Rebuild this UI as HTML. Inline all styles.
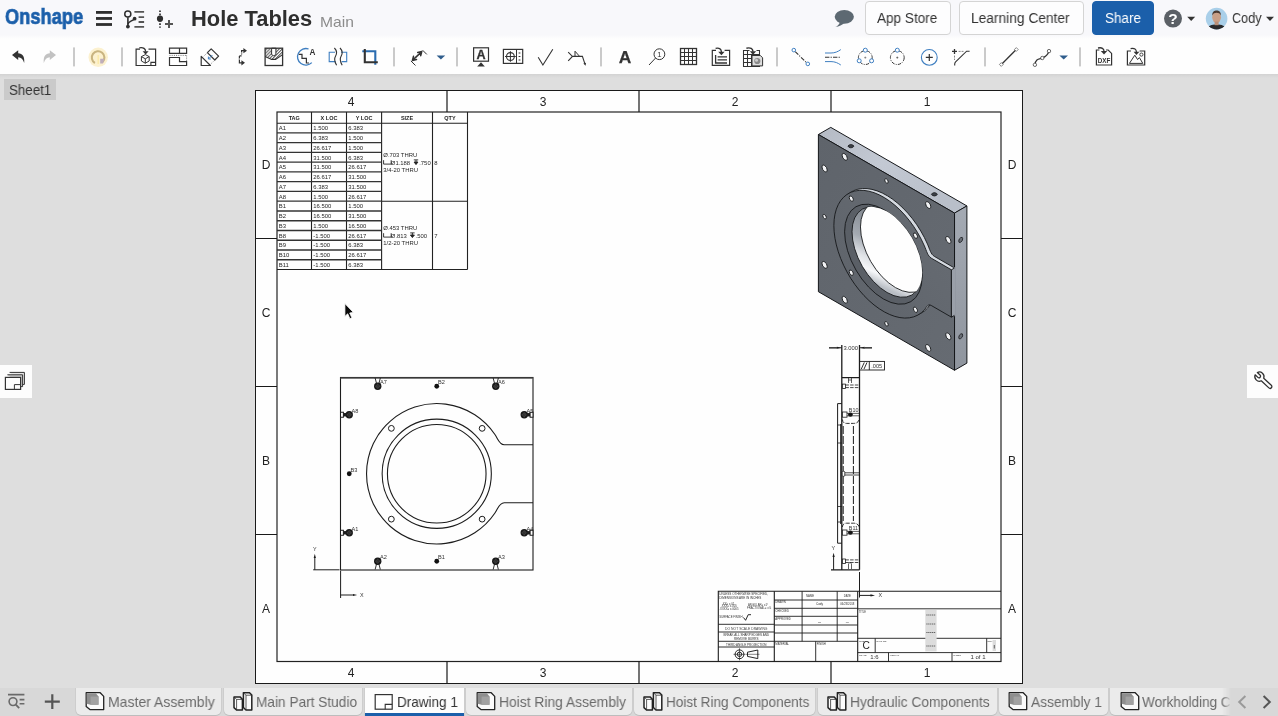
<!DOCTYPE html>
<html>
<head>
<meta charset="utf-8">
<title>Hole Tables</title>
<style>
*{box-sizing:border-box;margin:0;padding:0}
html,body{width:1278px;height:716px;overflow:hidden;background:#dedede;font-family:"Liberation Sans",sans-serif;color:#333}
.abs{position:absolute}
svg,.tx{will-change:transform}
#topbar{position:absolute;left:0;top:0;width:1278px;height:39px;background:linear-gradient(180deg,#f8f8fb 0,#f8f8fb 35px,#fefefe 39px);z-index:2}
#toolbar{position:absolute;left:0;top:37px;width:1278px;height:36.9px;background:#fefefe}
#canvas{position:absolute;left:0;top:76px;width:1278px;height:612px}
#tabbar{position:absolute;left:0;top:687.5px;width:1278px;height:28.5px;background:#d8d8d8}
.logo{position:absolute;left:4px;top:3px;font-weight:bold;font-size:24px;color:#1b5faa;letter-spacing:-1.2px;line-height:30px;transform-origin:0 0;transform:scaleX(.93)}
.title{position:absolute;left:191px;top:5px;font-weight:bold;font-size:22px;color:#2f2f2f;line-height:28px;white-space:nowrap}
.main{position:absolute;left:321px;top:11px;font-size:15px;color:#8a8a8a;line-height:20px}
.btn{position:absolute;top:1.3px;height:33.3px;border:1px solid #d4d4d4;border-radius:4px;background:#fdfdfe;font-size:14.5px;color:#333;text-align:center;line-height:29px;white-space:nowrap}
.btn.blue{background:#1b5faa;border-color:#1b5faa;color:#fff}
.sep{position:absolute;top:8px;width:2px;height:22px;background:#cfcfcf}
.ic{position:absolute;top:0;height:38px}
.sheetlbl{position:absolute;left:4.2px;top:3.4px;width:52.2px;height:21.1px;background:#cacaca}
.tab{position:absolute;top:0;height:27px;background:#ebebeb;border-radius:0 0 5px 5px;font-size:15px;color:#6a6a6a;line-height:27px;white-space:nowrap;box-shadow:0 1px 0 #bdbdbd, 1px 0 0 #cdcdcd, -1px 0 0 #cdcdcd}
.tx{position:absolute;white-space:nowrap;transform-origin:0 0;line-height:normal}
.tab.act{background:#fdfdfd;color:#333;border-bottom:3px solid #1b5faa;border-radius:0;height:28px}
.sidebtn{position:absolute;width:32px;height:33px;background:#fdfdfd;top:288.6px}
</style>
</head>
<body>
<div id="topbar">
  <div class="btn" style="left:864.5px;width:86px"></div>
  <div class="btn" style="left:959px;width:124.5px"></div>
  <div class="btn blue" style="left:1092px;width:62px"></div>
  <svg class="abs" id="topicons" style="left:0;top:0" width="1278" height="38" viewBox="0 0 1278 38"><rect x="96" y="11.0" width="16" height="2.8" fill="#2e2e2e"/>
<rect x="96" y="17.05" width="16" height="2.8" fill="#2e2e2e"/>
<rect x="96" y="23.1" width="16" height="2.8" fill="#2e2e2e"/>
<circle cx="127.8" cy="14" r="3.05" fill="none" stroke="#2e2e2e" stroke-width="1.5"/>
<path d="M127.9 17.2V26" stroke="#2e2e2e" stroke-width="1.6" fill="none"/>
<circle cx="127.9" cy="26.6" r="1.9" fill="#2e2e2e"/>
<path d="M127.9 24.5C128.2 21.5 131 21.8 134.4 19" stroke="#2e2e2e" stroke-width="1.5" fill="none"/>
<circle cx="134.6" cy="18.7" r="1.9" fill="#2e2e2e"/>
<path d="M134.4 11.9H144.1M138.6 17.1H144.1M138.6 22H144.1M134.4 26.9H144.1" stroke="#555" stroke-width="1.9" fill="none"/>
<path d="M160 10.4V27.8" stroke="#2e2e2e" stroke-width="1.7" stroke-dasharray="1.7 1.5" fill="none"/>
<circle cx="160" cy="18.7" r="3.1" fill="#2e2e2e"/>
<path d="M165 23.9H173M169 19.9V27.9" stroke="#555" stroke-width="2" fill="none"/>
<ellipse cx="844.3" cy="16.8" rx="9.6" ry="6.9" fill="#5d6972"/>
<path d="M840 21.5C839.5 24.5 837.5 26 835.4 27C839 26.6 842.5 25 844.5 22.8Z" fill="#5d6972"/>
<circle cx="1173" cy="18.6" r="9" fill="#5b6066"/>
<text x="1173" y="24.2" font-family="Liberation Sans, sans-serif" font-size="15.5" font-weight="bold" text-anchor="middle" fill="#fff">?</text>
<path d="M1187.2 16.7H1195.2L1191.2 21Z" fill="#333"/>
<clipPath id="av"><circle cx="1216.6" cy="18.6" r="10.8"/></clipPath>
<g clip-path="url(#av)"><rect x="1205" y="7" width="24" height="24" fill="#a9cfe9"/><path d="M1206 31C1207 26 1211 24.6 1216.6 24.6C1222 24.6 1226 26 1227.4 31Z" fill="#2a2a2c"/><ellipse cx="1216.6" cy="17.3" rx="4.4" ry="5.6" fill="#c99f86"/><path d="M1212.2 15.6C1212.2 11.6 1214.4 10.6 1216.6 10.6C1218.8 10.6 1221 11.6 1221 15.6C1220 13.4 1218.6 12.8 1216.6 12.8C1214.6 12.8 1213.2 13.4 1212.2 15.6Z" fill="#4a3a32"/><rect x="1214.6" y="21.6" width="4" height="3.6" fill="#b98f78"/></g>
<path d="M1266 16.7H1274L1270 21Z" fill="#333"/></svg>
<span class="tx" style="left:4.9px;top:4.25px;font-size:21.6px;font-weight:bold;color:#1b5faa;-webkit-text-stroke:0.7px #1b5faa;transform:scaleX(0.8452)">Onshape</span>
<span class="tx" style="left:191.2px;top:7.43px;font-size:21.4px;font-weight:bold;color:#2e2e2e;transform:scaleX(1.0229)">Hole Tables</span>
<span class="tx" style="left:320.3px;top:13.95px;font-size:14.2px;font-weight:normal;color:#8c8c8c;transform:scaleX(1.1019)">Main</span>
<span class="tx" style="left:877.2px;top:10.33px;font-size:14px;font-weight:normal;color:#333;transform:scaleX(0.9684)">App Store</span>
<span class="tx" style="left:971.1px;top:10.33px;font-size:14px;font-weight:normal;color:#333;transform:scaleX(0.9820)">Learning Center</span>
<span class="tx" style="left:1105.0px;top:10.33px;font-size:14px;font-weight:normal;color:#fff;transform:scaleX(0.9636)">Share</span>
<span class="tx" style="left:1232.2px;top:10.33px;font-size:14px;font-weight:normal;color:#333;transform:scaleX(0.9025)">Cody</span>
</div>
<div id="toolbar">
  <svg class="abs" id="tbicons" style="left:0;top:1px" width="1278" height="38" viewBox="0 0 1278 38"><rect x="73" y="9.4" width="2" height="19" fill="#cacaca"/>
<rect x="121" y="9.4" width="2" height="19" fill="#cacaca"/>
<rect x="393" y="9.4" width="2" height="19" fill="#cacaca"/>
<rect x="456" y="9.4" width="2" height="19" fill="#cacaca"/>
<rect x="600" y="9.4" width="2" height="19" fill="#cacaca"/>
<rect x="776" y="9.4" width="2" height="19" fill="#cacaca"/>
<rect x="984" y="9.4" width="2" height="19" fill="#cacaca"/>
<rect x="1079" y="9.4" width="2" height="19" fill="#cacaca"/>
<path d="M12 17.1L18.2 12.2V15.3C22.5 15.4 24.8 18.5 24.2 24.9C23 21 21.2 19.3 18.2 19.2V22Z" fill="#333"/>
<path d="M56 17.1L49.8 12.2V15.3C45.5 15.4 43.2 18.5 43.8 24.9C45 21 46.8 19.3 49.8 19.2V22Z" fill="#c2c2c2"/>
<circle cx="98.2" cy="19.3" r="9.7" fill="#fcf1cf"/>
<path d="M94.9 25A6.3 6.3 0 1 1 102.6 24" stroke="#c9b480" stroke-width="2.1" fill="none"/>
<path d="M98.2 17V26" stroke="#fbe9a8" stroke-width="1.4"/>
<path d="M100.2 20.8H104.4L103 25.6H100.2Z" fill="#bfaebb"/>
<path d="M140 11.2H136.1V27.5H155.6V11.2H148.5" stroke="#333" stroke-width="1.2" fill="none"/>
<path d="M150.9 27.5V24.4H155.6" stroke="#333" stroke-width="1.1" fill="none"/>
<path d="M145.3 16.6L149.2 18.6V23L145.3 25.2L141.4 23V18.6ZM141.4 18.6L145.3 20.8L149.2 18.6M145.3 20.8V25.2" stroke="#333" stroke-width="1" fill="none" stroke-linejoin="round"/>
<path d="M139.3 9.8C143.5 9 145.6 10.8 145.6 13.6" stroke="#333" stroke-width="1.3" fill="none"/>
<path d="M142.6 13.2H148.6L145.6 16.6Z" fill="#333"/>
<path d="M169.5 10.2H186.6V15.3H169.5ZM179.5 10.2V15.3" stroke="#333" stroke-width="1.2" fill="none"/>
<path d="M169.5 19.5H179.5V23.6H186.6V27.5H169.5Z" stroke="#333" stroke-width="1.2" fill="none"/>
<path d="M169.5 17.4H186.6M186.6 17.4V23" stroke="#666" stroke-width="0.9" stroke-dasharray="1 1.2" fill="none"/>
<path d="M201.2 18.4V27.5H210.4Z" stroke="#333" stroke-width="1.2" fill="none" stroke-linejoin="round"/>
<path d="M207.4 14.6L211.2 10.8L218.6 18.2L214.8 22Z" stroke="#333" stroke-width="1.2" fill="none" stroke-linejoin="round"/>
<path d="M203.8 18.2L207.4 14.6M211.2 25.6L214.8 22" stroke="#777" stroke-width="0.8" stroke-dasharray="1 1" fill="none"/>
<path d="M212.4 17L208.6 20.8M208.4 18.6V21H210.8" stroke="#3f7fc1" stroke-width="1" fill="none"/>
<path d="M244 12.7H241.6V16.6M239.4 18V24.8H242M241.6 17.9H239.4" stroke="#333" stroke-width="1.2" fill="none"/>
<path d="M241.6 14.6V15.4M239.4 20.6V21.6" stroke="#fefefe" stroke-width="1.6" fill="none"/>
<path d="M243.4 10.1L247 12.7L243.4 15.3ZM241.4 22.2L245 24.8L241.4 27.4Z" fill="#333"/>
<defs><pattern id="hat" width="2.2" height="2.2" patternUnits="userSpaceOnUse" patternTransform="rotate(45)"><rect width="2.2" height="2.2" fill="#fff"/><rect width="1.1" height="2.2" fill="#666"/></pattern></defs>
<path d="M265.1 10.2H282.6V16.6L275.6 21.4H271.6L265.1 18.6Z" fill="url(#hat)"/>
<path d="M271.6 10.2V16.6Q273.7 19 275.9 16.6V10.2Z" fill="#fff" stroke="#333" stroke-width="1"/>
<path d="M265.1 18.6L271.6 21.4H275.6L282.6 16.6" stroke="#333" stroke-width="1.1" fill="none"/>
<rect x="265.1" y="10.2" width="17.5" height="17.3" fill="none" stroke="#333" stroke-width="1.3"/>
<path d="M311.8 24.6A8.3 8.3 0 1 1 308.6 11" stroke="#3f7fc1" stroke-width="1.3" fill="none"/>
<path d="M298.8 16.4H302V20.4H306.4V25H309" stroke="#333" stroke-width="1.2" fill="none"/>
<text x="312.4" y="17.2" font-family="Liberation Sans, sans-serif" font-size="8.2" font-weight="bold" text-anchor="middle" fill="#333">A</text>
<path d="M335 14.2H329.2V23.6H335.6M341 14.2H346.7V23.6H341.6" stroke="#3f7fc1" stroke-width="1.1" fill="none"/>
<path d="M334.4 10C337.2 13 337.4 15 335.6 18C333.8 21 334.4 23.6 336.6 27.2M340 10C342.8 13 343 15 341.2 18C339.4 21 340 23.6 342.2 27.2" stroke="#333" stroke-width="1.1" fill="none"/>
<path d="M362.3 13.2H375.3V26.8" stroke="#2a6cb0" stroke-width="2.1" fill="none"/>
<path d="M364.8 11V24.3H377.8" stroke="#333" stroke-width="2.1" fill="none"/>
<path d="M412.40 22.40L421.80 13.60M416.52 21.59L412.40 22.40M413.48 18.34L412.40 22.40M417.68 14.41L421.80 13.60M420.72 17.66L421.80 13.60" stroke="#333" stroke-width="1.5" fill="none" stroke-linecap="round" stroke-linejoin="round"/>
<path d="M410.9 22.9L415.5 27.5M422.6 12.2L426.8 16.4" stroke="#333" stroke-width="1" fill="none"/>
<path d="M436.6 17.4H445.2L440.9 21.6Z" fill="#2f5d8c"/>
<rect x="473.6" y="9.8" width="14.9" height="13.4" fill="none" stroke="#333" stroke-width="1.2"/>
<text x="481" y="21.4" font-family="Liberation Sans, sans-serif" font-size="12.6" font-weight="bold" text-anchor="middle" fill="#333" stroke="#333" stroke-width="0.3">A</text>
<path d="M481 24.2L484.8 28.6H477.2Z" fill="#333"/>
<rect x="503.4" y="11.4" width="19.3" height="14" fill="none" stroke="#333" stroke-width="1.2"/>
<path d="M516.5 11.4V25.4" stroke="#333" stroke-width="1"/>
<circle cx="510.4" cy="18.5" r="3.9" fill="none" stroke="#333" stroke-width="1.1"/>
<path d="M505 18.5H515.8M510.4 13.2V23.8" stroke="#333" stroke-width="1"/>
<path d="M518.6 15H520.4M518.6 18.5H520.4M518.6 22H520.4" stroke="#333" stroke-width="1.1"/>
<path d="M538.2 19.3L542.9 27L552.8 11.2" stroke="#333" stroke-width="1.1" fill="none"/>
<path d="M568.2 14.2L572.4 18.4L568.2 22.8M572.4 18.4H582.4L585 26.2" stroke="#333" stroke-width="1.1" fill="none"/>
<path d="M575 18.4V13.2L579.6 18.4" stroke="#333" stroke-width="1" fill="none"/>
<path d="M583.4 25.6L586 24.8L585.6 27.8Z" fill="#333"/>
<text x="625.1" y="24.7" font-family="Liberation Sans, sans-serif" font-size="17.4" font-weight="bold" text-anchor="middle" fill="#333" stroke="#333" stroke-width="0.25">A</text>
<circle cx="659.4" cy="16.2" r="5.4" fill="none" stroke="#333" stroke-width="1"/>
<path d="M655.6 20L649 27" stroke="#333" stroke-width="1"/>
<text x="659.4" y="19" font-family="Liberation Sans, sans-serif" font-size="7.6" text-anchor="middle" fill="#333">1</text>
<rect x="680.5" y="10.5" width="16" height="16" fill="none" stroke="#333" stroke-width="1.3"/>
<path d="M684.5 10.5V26.5M688.5 10.5V26.5M692.5 10.5V26.5M680.5 14.5H696.5M680.5 18.5H696.5M680.5 22.5H696.5" stroke="#333" stroke-width="1"/>
<path d="M716 12.4H712.3V27.3H729.6V12.4H724.6" stroke="#333" stroke-width="1.2" fill="none"/>
<path d="M715.6 10.4C719.6 9.6 721.4 11.2 721.4 14" stroke="#333" stroke-width="1.3" fill="none"/>
<path d="M718.2 13.8H724.6L721.4 17.2Z" fill="#333"/>
<path d="M715.6 17V25H727M717.6 18.8H727M717.6 21.8H727" stroke="#333" stroke-width="1.3" fill="none"/>
<path d="M749.5 12.5H743.5V28.5H759.5V12.5H756.5M747.5 12.5V28.5M751.5 16.5V28.5M755.5 16.5V28.5M743.5 16.5H759.5M743.5 20.5H759.5M743.5 24.5H759.5" stroke="#333" stroke-width="1.05" fill="none"/>
<path d="M752 17.5H760.4L762.6 19.8V27.9H752Z" fill="#dedede" stroke="#333" stroke-width="1"/>
<circle cx="757.3" cy="23" r="3.1" fill="#8a8a8a"/><circle cx="756.5" cy="22.2" r="1.5" fill="#cfcfcf"/>
<path d="M746.4 10.2C750.6 9.2 752.8 10.8 753 13.6" stroke="#333" stroke-width="1.4" fill="none"/>
<path d="M749.8 13.2H756.2L753 16.8Z" fill="#333"/>
<path d="M795.2 13.6L806.4 24.6" stroke="#333" stroke-width="1.1" stroke-dasharray="4.4 1.4 1 1.4" fill="none"/>
<circle cx="793.8" cy="12.1" r="1.8" fill="#fff" stroke="#3f7fc1" stroke-width="1"/><circle cx="807.8" cy="25.9" r="1.8" fill="#fff" stroke="#3f7fc1" stroke-width="1"/>
<path d="M825 15H831C835 15 838 13.6 840.8 11.6M825 23.6H831C835 23.6 838 25 840.8 27" stroke="#3f7fc1" stroke-width="1" fill="none"/>
<path d="M825 19.3H841" stroke="#333" stroke-width="1.1" stroke-dasharray="4.4 1.2 1.2 1.2" fill="none"/>
<circle cx="865.3" cy="19.6" r="6.9" fill="none" stroke="#333" stroke-width="1" stroke-dasharray="3.4 1.2 1 1.2"/>
<path d="M864.3 19.6H866.3M865.3 18.6V20.6" stroke="#777" stroke-width="0.8"/>
<circle cx="865.3" cy="12.2" r="2" fill="#fff" stroke="#3f7fc1" stroke-width="1"/>
<circle cx="859.2" cy="22.8" r="2" fill="#fff" stroke="#3f7fc1" stroke-width="1"/>
<circle cx="871.6" cy="22.8" r="2" fill="#fff" stroke="#3f7fc1" stroke-width="1"/>
<circle cx="897.3" cy="19.6" r="6.9" fill="none" stroke="#333" stroke-width="1" stroke-dasharray="3.4 1.2 1 1.2"/>
<path d="M896.3 19.6H898.3M897.3 18.6V20.6" stroke="#555" stroke-width="0.8"/>
<circle cx="897.3" cy="12.2" r="2" fill="#fff" stroke="#3f7fc1" stroke-width="1"/>
<circle cx="929.3" cy="19.4" r="7.9" fill="none" stroke="#3f7fc1" stroke-width="1.1"/>
<path d="M925.8 19.4H932.8M929.3 15.9V22.9" stroke="#333" stroke-width="1.2"/>
<path d="M952 13.4H957M954.5 10.9V15.9" stroke="#333" stroke-width="1.3"/>
<path d="M958.6 13.4H963.5M954.5 17.6V22" stroke="#777" stroke-width="0.9" stroke-dasharray="2 1"/>
<path d="M969.6 13.2H966.6L955.6 23.8Q954.7 24.8 954.7 26V27.6" stroke="#333" stroke-width="1.1" fill="none"/>
<path d="M1001.6 26.2L1016 11.8" stroke="#333" stroke-width="1.3"/>
<path d="M1001.3 24.6L1003.2 26.5L1001.3 28.4L999.4 26.5ZM1016.3 9.6L1018.2 11.5L1016.3 13.4L1014.4 11.5Z" fill="#fff" stroke="#555" stroke-width="0.7"/>
<path d="M1035 26.6C1035.6 20.4 1039.4 21.2 1042.3 20C1045.4 18.8 1047.6 17.4 1049 13.2" stroke="#333" stroke-width="1.2" fill="none"/>
<circle cx="1034.9" cy="26.8" r="1.7" fill="#fff" stroke="#444" stroke-width="0.8"/>
<circle cx="1042.3" cy="20" r="1.7" fill="#fff" stroke="#444" stroke-width="0.8"/>
<circle cx="1049" cy="13.1" r="1.7" fill="#fff" stroke="#444" stroke-width="0.8"/>
<path d="M1059.4 17.4H1068L1063.7 21.6Z" fill="#2f5d8c"/>
<path d="M1099.4 12H1096.4V27H1111.6V15.4L1108.2 12H1106" stroke="#333" stroke-width="1.2" fill="none"/>
<path d="M1098 10C1102 9.2 1104 10.6 1104 13.2" stroke="#333" stroke-width="1.3" fill="none"/>
<path d="M1100.8 13H1107.2L1104 16.6Z" fill="#333"/>
<text x="1104" y="25.4" font-family="Liberation Sans, sans-serif" font-size="7.2" font-weight="bold" text-anchor="middle" fill="#333" textLength="12.6" lengthAdjust="spacingAndGlyphs">DXF</text>
<path d="M1131 13H1127.4V27H1144.7V13H1139.6" stroke="#333" stroke-width="1.2" fill="none"/>
<path d="M1130.6 10.6C1134.6 9.8 1136.4 11.4 1136.4 14" stroke="#333" stroke-width="1.2" fill="none"/>
<path d="M1133.6 13.8H1139.4L1136.4 17Z" fill="#333"/>
<path d="M1129.4 25.4L1134.8 17.2L1137.6 21.6L1139.4 19.6L1142.8 25.4Z" stroke="#333" stroke-width="1" fill="none" stroke-linejoin="round"/>
<circle cx="1141.4" cy="16.6" r="1.6" fill="none" stroke="#333" stroke-width="0.9"/></svg>
</div>
<div id="canvas">
  <div class="abs" style="left:0;top:-2.1px;width:1278px;height:4px;background:linear-gradient(180deg,#d3d3d3,#dedede)"></div><div class="sheetlbl"></div><span class="tx" style="left:8.7px;top:6.43px;font-size:14px;font-weight:normal;color:#333;transform:scaleX(0.9532)">Sheet1</span>
  <div class="sidebtn" style="left:0;width:31.6px"></div>
  <div class="sidebtn" style="left:1246.6px;width:32px"></div>
  <svg class="abs" style="left:0;top:288px" width="32" height="34" viewBox="0 364 32 34">
    <path d="M9.6 372.4H24.4V384.4" fill="#e8e8e8" stroke="#333" stroke-width="1"/>
    <path d="M7.4 374.8H22.6V386.6" fill="#d0d0d0" stroke="#333" stroke-width="1"/>
    <rect x="5.4" y="377.4" width="15.2" height="12" fill="#fdfdfd" stroke="#333" stroke-width="1.2"/>
    <path d="M14.4 389.4V384.6H20.6" fill="none" stroke="#333" stroke-width="1"/>
    <path d="M22.6 386.6H20.6M24.4 384.4H22.6" stroke="#333" stroke-width="1"/>
  </svg>
  <svg class="abs" style="left:1246px;top:288px" width="32" height="34" viewBox="1246 364 32 34">
    <path transform="translate(1259.4 376.6) rotate(43)" d="M-4.31 -1.6L-0.6 -1.6A1.6 1.6 0 0 1 -0.6 1.6L-4.31 1.6A4.6 4.6 0 0 0 4.23 1.8L14.6 1.8A1.8 1.8 0 0 0 14.6 -1.8L4.23 -1.8A4.6 4.6 0 0 0 -4.31 -1.6Z" fill="#fdfdfd" stroke="#2e2e2e" stroke-width="1.25" stroke-linejoin="round"/>
  </svg>
  <svg class="abs" style="left:340px;top:224px;z-index:3" width="20" height="24" viewBox="340 300 20 24">
    <path d="M344.9 303.6V316.4L347.7 313.8L349.9 318.7L351.9 317.8L349.7 313L353.4 312.4Z" fill="#0a0a0a" stroke="#fff" stroke-width="0.8" stroke-linejoin="round"/>
  </svg>
  <svg class="abs" id="sheet" style="left:0;top:0" width="1278" height="612" viewBox="0 76 1278 612"><rect x="255.5" y="90.5" width="767" height="593" fill="#fefefe" stroke="#1a1a1a" stroke-width="1"/>
<rect x="277" y="112" width="724" height="549.5" fill="none" stroke="#222" stroke-width="1.2"/>
<path d="M447 90.5V112M447 661.5V683.5" stroke="#1a1a1a" stroke-width="1.2"/>
<path d="M639 90.5V112M639 661.5V683.5" stroke="#1a1a1a" stroke-width="1.2"/>
<path d="M831 90.5V112M831 661.5V683.5" stroke="#1a1a1a" stroke-width="1.2"/>
<path d="M255.5 238.5H277M1001 238.5H1022.5" stroke="#1a1a1a" stroke-width="1.2"/>
<path d="M255.5 386.5H277M1001 386.5H1022.5" stroke="#1a1a1a" stroke-width="1.2"/>
<path d="M255.5 534.5H277M1001 534.5H1022.5" stroke="#1a1a1a" stroke-width="1.2"/>
<text x="351" y="105.5" font-family="Liberation Sans, sans-serif" font-size="12" text-anchor="middle" fill="#222">4</text>
<text x="351" y="677" font-family="Liberation Sans, sans-serif" font-size="12" text-anchor="middle" fill="#222">4</text>
<text x="543" y="105.5" font-family="Liberation Sans, sans-serif" font-size="12" text-anchor="middle" fill="#222">3</text>
<text x="543" y="677" font-family="Liberation Sans, sans-serif" font-size="12" text-anchor="middle" fill="#222">3</text>
<text x="735" y="105.5" font-family="Liberation Sans, sans-serif" font-size="12" text-anchor="middle" fill="#222">2</text>
<text x="735" y="677" font-family="Liberation Sans, sans-serif" font-size="12" text-anchor="middle" fill="#222">2</text>
<text x="927" y="105.5" font-family="Liberation Sans, sans-serif" font-size="12" text-anchor="middle" fill="#222">1</text>
<text x="927" y="677" font-family="Liberation Sans, sans-serif" font-size="12" text-anchor="middle" fill="#222">1</text>
<text x="266" y="168.5" font-family="Liberation Sans, sans-serif" font-size="12" text-anchor="middle" fill="#222">D</text>
<text x="1012" y="168.5" font-family="Liberation Sans, sans-serif" font-size="12" text-anchor="middle" fill="#222">D</text>
<text x="266" y="316.5" font-family="Liberation Sans, sans-serif" font-size="12" text-anchor="middle" fill="#222">C</text>
<text x="1012" y="316.5" font-family="Liberation Sans, sans-serif" font-size="12" text-anchor="middle" fill="#222">C</text>
<text x="266" y="464.5" font-family="Liberation Sans, sans-serif" font-size="12" text-anchor="middle" fill="#222">B</text>
<text x="1012" y="464.5" font-family="Liberation Sans, sans-serif" font-size="12" text-anchor="middle" fill="#222">B</text>
<text x="266" y="612.5" font-family="Liberation Sans, sans-serif" font-size="12" text-anchor="middle" fill="#222">A</text>
<text x="1012" y="612.5" font-family="Liberation Sans, sans-serif" font-size="12" text-anchor="middle" fill="#222">A</text>
<path d="M277 123.2H467.5M277 269.495H467.5M381.6 201.224H467.5" stroke="#222" stroke-width="1.1" fill="none"/>
<path d="M311.5 112V269.495" stroke="#222" stroke-width="1.1"/>
<path d="M346.5 112V269.495" stroke="#222" stroke-width="1.1"/>
<path d="M381.6 112V269.495" stroke="#222" stroke-width="1.1"/>
<path d="M432.5 112V269.495" stroke="#222" stroke-width="1.1"/>
<path d="M467.5 112V269.495" stroke="#222" stroke-width="1.1"/>
<path d="M277 132.95H381.6" stroke="#333" stroke-width="1.3"/>
<path d="M277 142.71H381.6" stroke="#333" stroke-width="1.3"/>
<path d="M277 152.46H381.6" stroke="#333" stroke-width="1.3"/>
<path d="M277 162.21H381.6" stroke="#333" stroke-width="1.3"/>
<path d="M277 171.97H381.6" stroke="#333" stroke-width="1.3"/>
<path d="M277 181.72H381.6" stroke="#333" stroke-width="1.3"/>
<path d="M277 191.47H381.6" stroke="#333" stroke-width="1.3"/>
<path d="M277 201.22H381.6" stroke="#333" stroke-width="1.3"/>
<path d="M277 210.98H381.6" stroke="#333" stroke-width="1.3"/>
<path d="M277 220.73H381.6" stroke="#333" stroke-width="1.3"/>
<path d="M277 230.48H381.6" stroke="#333" stroke-width="1.3"/>
<path d="M277 240.24H381.6" stroke="#333" stroke-width="1.3"/>
<path d="M277 249.99H381.6" stroke="#333" stroke-width="1.3"/>
<path d="M277 259.74H381.6" stroke="#333" stroke-width="1.3"/>
<text x="294.25" y="119.6" font-family="Liberation Sans, sans-serif" font-size="5.5" font-weight="bold" text-anchor="middle" fill="#222">TAG</text>
<text x="329.0" y="119.6" font-family="Liberation Sans, sans-serif" font-size="5.5" font-weight="bold" text-anchor="middle" fill="#222">X LOC</text>
<text x="364.05" y="119.6" font-family="Liberation Sans, sans-serif" font-size="5.5" font-weight="bold" text-anchor="middle" fill="#222">Y LOC</text>
<text x="407.05" y="119.6" font-family="Liberation Sans, sans-serif" font-size="5.5" font-weight="bold" text-anchor="middle" fill="#222">SIZE</text>
<text x="450.0" y="119.6" font-family="Liberation Sans, sans-serif" font-size="5.5" font-weight="bold" text-anchor="middle" fill="#222">QTY</text>
<text x="278.8" y="130.40" font-family="Liberation Sans, sans-serif" font-size="5.9" fill="#262626">A1</text>
<text x="313.3" y="130.40" font-family="Liberation Sans, sans-serif" font-size="5.9" fill="#262626">1.500</text>
<text x="348.3" y="130.40" font-family="Liberation Sans, sans-serif" font-size="5.9" fill="#262626">6.383</text>
<text x="278.8" y="140.15" font-family="Liberation Sans, sans-serif" font-size="5.9" fill="#262626">A2</text>
<text x="313.3" y="140.15" font-family="Liberation Sans, sans-serif" font-size="5.9" fill="#262626">6.383</text>
<text x="348.3" y="140.15" font-family="Liberation Sans, sans-serif" font-size="5.9" fill="#262626">1.500</text>
<text x="278.8" y="149.91" font-family="Liberation Sans, sans-serif" font-size="5.9" fill="#262626">A3</text>
<text x="313.3" y="149.91" font-family="Liberation Sans, sans-serif" font-size="5.9" fill="#262626">26.617</text>
<text x="348.3" y="149.91" font-family="Liberation Sans, sans-serif" font-size="5.9" fill="#262626">1.500</text>
<text x="278.8" y="159.66" font-family="Liberation Sans, sans-serif" font-size="5.9" fill="#262626">A4</text>
<text x="313.3" y="159.66" font-family="Liberation Sans, sans-serif" font-size="5.9" fill="#262626">31.500</text>
<text x="348.3" y="159.66" font-family="Liberation Sans, sans-serif" font-size="5.9" fill="#262626">6.383</text>
<text x="278.8" y="169.41" font-family="Liberation Sans, sans-serif" font-size="5.9" fill="#262626">A5</text>
<text x="313.3" y="169.41" font-family="Liberation Sans, sans-serif" font-size="5.9" fill="#262626">31.500</text>
<text x="348.3" y="169.41" font-family="Liberation Sans, sans-serif" font-size="5.9" fill="#262626">26.617</text>
<text x="278.8" y="179.16" font-family="Liberation Sans, sans-serif" font-size="5.9" fill="#262626">A6</text>
<text x="313.3" y="179.16" font-family="Liberation Sans, sans-serif" font-size="5.9" fill="#262626">26.617</text>
<text x="348.3" y="179.16" font-family="Liberation Sans, sans-serif" font-size="5.9" fill="#262626">31.500</text>
<text x="278.8" y="188.92" font-family="Liberation Sans, sans-serif" font-size="5.9" fill="#262626">A7</text>
<text x="313.3" y="188.92" font-family="Liberation Sans, sans-serif" font-size="5.9" fill="#262626">6.383</text>
<text x="348.3" y="188.92" font-family="Liberation Sans, sans-serif" font-size="5.9" fill="#262626">31.500</text>
<text x="278.8" y="198.67" font-family="Liberation Sans, sans-serif" font-size="5.9" fill="#262626">A8</text>
<text x="313.3" y="198.67" font-family="Liberation Sans, sans-serif" font-size="5.9" fill="#262626">1.500</text>
<text x="348.3" y="198.67" font-family="Liberation Sans, sans-serif" font-size="5.9" fill="#262626">26.617</text>
<text x="278.8" y="208.42" font-family="Liberation Sans, sans-serif" font-size="5.9" fill="#262626">B1</text>
<text x="313.3" y="208.42" font-family="Liberation Sans, sans-serif" font-size="5.9" fill="#262626">16.500</text>
<text x="348.3" y="208.42" font-family="Liberation Sans, sans-serif" font-size="5.9" fill="#262626">1.500</text>
<text x="278.8" y="218.18" font-family="Liberation Sans, sans-serif" font-size="5.9" fill="#262626">B2</text>
<text x="313.3" y="218.18" font-family="Liberation Sans, sans-serif" font-size="5.9" fill="#262626">16.500</text>
<text x="348.3" y="218.18" font-family="Liberation Sans, sans-serif" font-size="5.9" fill="#262626">31.500</text>
<text x="278.8" y="227.93" font-family="Liberation Sans, sans-serif" font-size="5.9" fill="#262626">B3</text>
<text x="313.3" y="227.93" font-family="Liberation Sans, sans-serif" font-size="5.9" fill="#262626">1.500</text>
<text x="348.3" y="227.93" font-family="Liberation Sans, sans-serif" font-size="5.9" fill="#262626">16.500</text>
<text x="278.8" y="237.68" font-family="Liberation Sans, sans-serif" font-size="5.9" fill="#262626">B8</text>
<text x="313.3" y="237.68" font-family="Liberation Sans, sans-serif" font-size="5.9" fill="#262626">-1.500</text>
<text x="348.3" y="237.68" font-family="Liberation Sans, sans-serif" font-size="5.9" fill="#262626">26.617</text>
<text x="278.8" y="247.44" font-family="Liberation Sans, sans-serif" font-size="5.9" fill="#262626">B9</text>
<text x="313.3" y="247.44" font-family="Liberation Sans, sans-serif" font-size="5.9" fill="#262626">-1.500</text>
<text x="348.3" y="247.44" font-family="Liberation Sans, sans-serif" font-size="5.9" fill="#262626">6.383</text>
<text x="278.8" y="257.19" font-family="Liberation Sans, sans-serif" font-size="5.9" fill="#262626">B10</text>
<text x="313.3" y="257.19" font-family="Liberation Sans, sans-serif" font-size="5.9" fill="#262626">-1.500</text>
<text x="348.3" y="257.19" font-family="Liberation Sans, sans-serif" font-size="5.9" fill="#262626">26.617</text>
<text x="278.8" y="266.94" font-family="Liberation Sans, sans-serif" font-size="5.9" fill="#262626">B11</text>
<text x="313.3" y="266.94" font-family="Liberation Sans, sans-serif" font-size="5.9" fill="#262626">-1.500</text>
<text x="348.3" y="266.94" font-family="Liberation Sans, sans-serif" font-size="5.9" fill="#262626">6.383</text>
<text x="383.3" y="157.2" font-family="Liberation Sans, sans-serif" font-size="5.9" fill="#262626">Ø.703 THRU</text>
<path d="M383.6 160.2V164.1H391.2V160.2" stroke="#222" stroke-width="0.9" fill="none"/>
<text x="390.8" y="164.5" font-family="Liberation Sans, sans-serif" font-size="5.9" fill="#262626">Ø1.188</text>
<path d="M413.8 159.9H418.2M416.0 159.9V164.3M414.0 162.0L416.0 164.5L418.0 162.0Z" stroke="#222" stroke-width="0.9" fill="#222"/>
<text x="419.2" y="164.5" font-family="Liberation Sans, sans-serif" font-size="5.9" fill="#262626">.750</text>
<text x="383.3" y="171.9" font-family="Liberation Sans, sans-serif" font-size="5.9" fill="#262626">3/4-20 THRU</text>
<text x="434.2" y="164.5" font-family="Liberation Sans, sans-serif" font-size="5.9" fill="#262626">8</text>
<text x="383.3" y="230.2" font-family="Liberation Sans, sans-serif" font-size="5.9" fill="#262626">Ø.453 THRU</text>
<path d="M383.6 233.2V237.1H391.2V233.2" stroke="#222" stroke-width="0.9" fill="none"/>
<text x="390.8" y="237.5" font-family="Liberation Sans, sans-serif" font-size="5.9" fill="#262626">Ø.813</text>
<path d="M410.2 232.9H414.59999999999997M412.4 232.9V237.3M410.4 235.0L412.4 237.5L414.4 235.0Z" stroke="#222" stroke-width="0.9" fill="#222"/>
<text x="415.59999999999997" y="237.5" font-family="Liberation Sans, sans-serif" font-size="5.9" fill="#262626">.500</text>
<text x="383.3" y="244.9" font-family="Liberation Sans, sans-serif" font-size="5.9" fill="#262626">1/2-20 THRU</text>
<text x="434.2" y="237.5" font-family="Liberation Sans, sans-serif" font-size="5.9" fill="#262626">7</text>
<rect x="340.5" y="377.5" width="192.5" height="192.5" fill="none" stroke="#1c1c1c" stroke-width="1.1"/>
<path d="M340.5 378.1H533.0" stroke="#555" stroke-width="1.2"/>
<path d="M494.94 434.50A70.2 70.2 0 1 0 494.94 513.01C498.02 508.45 499.24 502.76 504.24 502.76H533.0M494.94 434.50C498.02 439.06 499.24 444.76 504.24 444.76H533.0" fill="none" stroke="#1c1c1c" stroke-width="1.1"/>
<circle cx="436.74" cy="473.76" r="54.6" fill="none" stroke="#1c1c1c" stroke-width="1.1"/>
<circle cx="436.74" cy="473.76" r="49.3" fill="none" stroke="#1c1c1c" stroke-width="1.1"/>
<circle cx="482.14" cy="428.36" r="2.9" fill="none" stroke="#1c1c1c" stroke-width="1"/>
<circle cx="391.35" cy="428.36" r="2.9" fill="none" stroke="#1c1c1c" stroke-width="1"/>
<circle cx="391.35" cy="519.15" r="2.9" fill="none" stroke="#1c1c1c" stroke-width="1"/>
<circle cx="482.14" cy="519.15" r="2.9" fill="none" stroke="#1c1c1c" stroke-width="1"/>
<circle cx="349.25" cy="532.77" r="3.7" fill="#161616"/>
<circle cx="349.25" cy="532.77" r="1.7" fill="none" stroke="#5a5a5a" stroke-width="0.5"/>
<path d="M346.25 532.77H352.25M349.25 529.77V535.77" stroke="#555" stroke-width="0.4"/>
<rect x="342.75" y="531.07" width="4" height="3.4" fill="#1c1c1c"/>
<rect x="340.50" y="530.27" width="2.9" height="5" fill="#fefefe" stroke="#1c1c1c" stroke-width="1"/>
<text x="351.45" y="530.57" font-family="Liberation Sans, sans-serif" font-size="5.6" fill="#333">A1</text>
<circle cx="377.73" cy="561.25" r="3.7" fill="#161616"/>
<circle cx="377.73" cy="561.25" r="1.7" fill="none" stroke="#5a5a5a" stroke-width="0.5"/>
<path d="M374.73 561.25H380.73M377.73 558.25V564.25" stroke="#555" stroke-width="0.4"/>
<path d="M375.13 569.50L376.73 563.25M380.33 569.50L378.73 563.25" stroke="#1c1c1c" stroke-width="0.9" fill="none"/>
<text x="379.93" y="559.05" font-family="Liberation Sans, sans-serif" font-size="5.6" fill="#333">A2</text>
<circle cx="495.76" cy="561.25" r="3.7" fill="#161616"/>
<circle cx="495.76" cy="561.25" r="1.7" fill="none" stroke="#5a5a5a" stroke-width="0.5"/>
<path d="M492.76 561.25H498.76M495.76 558.25V564.25" stroke="#555" stroke-width="0.4"/>
<path d="M493.16 569.50L494.76 563.25M498.36 569.50L496.76 563.25" stroke="#1c1c1c" stroke-width="0.9" fill="none"/>
<text x="497.96" y="559.05" font-family="Liberation Sans, sans-serif" font-size="5.6" fill="#333">A3</text>
<circle cx="524.24" cy="532.77" r="3.7" fill="#161616"/>
<circle cx="524.24" cy="532.77" r="1.7" fill="none" stroke="#5a5a5a" stroke-width="0.5"/>
<path d="M521.24 532.77H527.24M524.24 529.77V535.77" stroke="#555" stroke-width="0.4"/>
<rect x="526.74" y="531.07" width="4" height="3.4" fill="#1c1c1c"/>
<rect x="530.09" y="530.27" width="2.9" height="5" fill="#fefefe" stroke="#1c1c1c" stroke-width="1"/>
<text x="526.44" y="530.57" font-family="Liberation Sans, sans-serif" font-size="5.6" fill="#333">A4</text>
<circle cx="524.24" cy="414.74" r="3.7" fill="#161616"/>
<circle cx="524.24" cy="414.74" r="1.7" fill="none" stroke="#5a5a5a" stroke-width="0.5"/>
<path d="M521.24 414.74H527.24M524.24 411.74V417.74" stroke="#555" stroke-width="0.4"/>
<rect x="526.74" y="413.04" width="4" height="3.4" fill="#1c1c1c"/>
<rect x="530.09" y="412.24" width="2.9" height="5" fill="#fefefe" stroke="#1c1c1c" stroke-width="1"/>
<text x="526.44" y="412.54" font-family="Liberation Sans, sans-serif" font-size="5.6" fill="#333">A5</text>
<circle cx="495.76" cy="386.26" r="3.7" fill="#161616"/>
<circle cx="495.76" cy="386.26" r="1.7" fill="none" stroke="#5a5a5a" stroke-width="0.5"/>
<path d="M492.76 386.26H498.76M495.76 383.26V389.26" stroke="#555" stroke-width="0.4"/>
<path d="M493.16 378.01L494.76 384.26M498.36 378.01L496.76 384.26" stroke="#1c1c1c" stroke-width="0.9" fill="none"/>
<text x="497.96" y="384.06" font-family="Liberation Sans, sans-serif" font-size="5.6" fill="#333">A6</text>
<circle cx="377.73" cy="386.26" r="3.7" fill="#161616"/>
<circle cx="377.73" cy="386.26" r="1.7" fill="none" stroke="#5a5a5a" stroke-width="0.5"/>
<path d="M374.73 386.26H380.73M377.73 383.26V389.26" stroke="#555" stroke-width="0.4"/>
<path d="M375.13 378.01L376.73 384.26M380.33 378.01L378.73 384.26" stroke="#1c1c1c" stroke-width="0.9" fill="none"/>
<text x="379.93" y="384.06" font-family="Liberation Sans, sans-serif" font-size="5.6" fill="#333">A7</text>
<circle cx="349.25" cy="414.74" r="3.7" fill="#161616"/>
<circle cx="349.25" cy="414.74" r="1.7" fill="none" stroke="#5a5a5a" stroke-width="0.5"/>
<path d="M346.25 414.74H352.25M349.25 411.74V417.74" stroke="#555" stroke-width="0.4"/>
<rect x="342.75" y="413.04" width="4" height="3.4" fill="#1c1c1c"/>
<rect x="340.50" y="412.24" width="2.9" height="5" fill="#fefefe" stroke="#1c1c1c" stroke-width="1"/>
<text x="351.45" y="412.54" font-family="Liberation Sans, sans-serif" font-size="5.6" fill="#333">A8</text>
<circle cx="436.74" cy="561.25" r="2.4" fill="#111"/>
<text x="437.94" y="559.25" font-family="Liberation Sans, sans-serif" font-size="5.6" fill="#333">B1</text>
<circle cx="436.74" cy="386.26" r="2.4" fill="#111"/>
<text x="437.94" y="384.26" font-family="Liberation Sans, sans-serif" font-size="5.6" fill="#333">B2</text>
<circle cx="349.25" cy="473.76" r="2.4" fill="#111"/>
<text x="350.45" y="471.76" font-family="Liberation Sans, sans-serif" font-size="5.6" fill="#333">B3</text>
<path d="M313.2 569.8H339.5M314.8 569.8V557" stroke="#1c1c1c" stroke-width="1" fill="none"/>
<path d="M313.7 558L314.8 553.8L315.9 558Z" fill="#1c1c1c"/>
<text x="313" y="550.5" font-family="Liberation Sans, sans-serif" font-size="5.4" fill="#333">Y</text>
<path d="M340.6 570.8V598M340.6 595H353.5" stroke="#1c1c1c" stroke-width="1" fill="none"/>
<path d="M353 593.9L357.2 595L353 596.1Z" fill="#1c1c1c"/>
<text x="360" y="597" font-family="Liberation Sans, sans-serif" font-size="5.4" fill="#333">X</text>
<path d="M841.8 377.6H859.5M841.8 345V569.8M859.5 345V569.8M831 569.8H859.5" stroke="#1c1c1c" stroke-width="1.3" fill="none"/>
<path d="M829 347.8H841.8M859.5 347.8H872" stroke="#1c1c1c" stroke-width="0.8"/>
<path d="M841.8 347.8L836.8 346.8V348.8ZM859.5 347.8L864.5 346.8V348.8Z" fill="#1c1c1c"/>
<path d="M829 347.8H837M864 347.8H872" stroke="#444" stroke-width="1.6"/>
<text x="850.7" y="350" font-family="Liberation Sans, sans-serif" font-size="5.8" text-anchor="middle" fill="#333">3.000</text>
<rect x="859.5" y="361.4" width="25" height="8.6" fill="none" stroke="#1c1c1c" stroke-width="0.9"/>
<path d="M869.3 361.4V370M861.3 369L864.3 362.4M864 369L867 362.4" stroke="#1c1c1c" stroke-width="0.9"/>
<text x="871.3" y="367.8" font-family="Liberation Sans, sans-serif" font-size="5.6" fill="#333">.005</text>
<path d="M841.8 403.6H837.6V543.2H841.8M840.7 424V524" stroke="#1c1c1c" stroke-width="1" fill="none"/>
<path d="M837.6 425H841.8M837.6 443H841.8M837.6 506.5H841.8M837.6 522H841.8" stroke="#1c1c1c" stroke-width="0.8" fill="none"/>
<path d="M843.2 426V521M853.4 426V521" stroke="#1c1c1c" stroke-width="1" fill="none" stroke-dasharray="8 2"/>
<path d="M842.4 419.5Q842.6 423.4 846.5 423.4H853.5Q858 423.4 859 420" stroke="#1c1c1c" stroke-width="0.9" fill="none" stroke-dasharray="4 1.4"/>
<path d="M842.4 527Q842.6 523.2 846.5 523.2H853.5Q858 523.2 859 526.6" stroke="#1c1c1c" stroke-width="0.9" fill="none" stroke-dasharray="4 1.4"/>
<rect x="842.4" y="384.1" width="3" height="4.4" fill="#fefefe" stroke="#1c1c1c" stroke-width="0.8"/>
<path d="M845.4 385.0H859.5M845.4 387.6H859.5" stroke="#1c1c1c" stroke-width="0.8" stroke-dasharray="3.5 1.2"/>
<path d="M848.5 378V383M851.5 378V383M848.5 380H851.5" stroke="#1c1c1c" stroke-width="0.7"/>
<rect x="842.4" y="559.0" width="3" height="4.4" fill="#fefefe" stroke="#1c1c1c" stroke-width="0.8"/>
<path d="M845.4 559.9000000000001H859.5M845.4 562.5H859.5" stroke="#1c1c1c" stroke-width="0.8" stroke-dasharray="3.5 1.2"/>
<path d="M848.5 569V564L850 562L851.5 564V569" stroke="#1c1c1c" stroke-width="0.7" fill="none"/>
<rect x="842.4" y="412.0" width="4.6" height="5.2" fill="#fefefe" stroke="#1c1c1c" stroke-width="0.8"/>
<ellipse cx="850.4" cy="414.6" rx="2.4" ry="2.2" fill="#111"/>
<path d="M846.8 413.40000000000003H859.5M846.8 415.8H859.5" stroke="#1c1c1c" stroke-width="0.7"/>
<text x="848.8" y="412.40000000000003" font-family="Liberation Sans, sans-serif" font-size="5.4" fill="#333">B10</text>
<rect x="842.4" y="530.0" width="4.6" height="5.2" fill="#fefefe" stroke="#1c1c1c" stroke-width="0.8"/>
<ellipse cx="850.4" cy="532.6" rx="2.4" ry="2.2" fill="#111"/>
<path d="M846.8 531.4H859.5M846.8 533.8000000000001H859.5" stroke="#1c1c1c" stroke-width="0.7"/>
<text x="848.8" y="530.4" font-family="Liberation Sans, sans-serif" font-size="5.4" fill="#333">B11</text>
<rect x="842.1999999999999" y="471.3" width="2.6" height="5" rx="1" fill="#fefefe" stroke="#1c1c1c" stroke-width="0.8"/>
<path d="M844.8 472.8H859.5M844.8 475H859.5" stroke="#1c1c1c" stroke-width="0.8"/>
<path d="M833.6 569.8V556" stroke="#1c1c1c" stroke-width="1"/>
<path d="M832.5 557L833.6 552.8L834.7 557Z" fill="#1c1c1c"/>
<text x="831.6" y="550" font-family="Liberation Sans, sans-serif" font-size="5.4" fill="#333">Y</text>
<path d="M859.5 572V597.5M859.5 595.4H871" stroke="#1c1c1c" stroke-width="1" fill="none"/>
<path d="M870.5 594.3L875 595.4L870.5 596.5Z" fill="#1c1c1c"/>
<text x="878.6" y="597.4" font-family="Liberation Sans, sans-serif" font-size="5.4" fill="#333">X</text>
<defs><linearGradient id="gtop" x1="0" y1="0" x2="1" y2="0.55"><stop offset="0" stop-color="#b4bac4"/><stop offset="0.5" stop-color="#c3c9d3"/><stop offset="1" stop-color="#b9bfc9"/></linearGradient><linearGradient id="gside" x1="0" y1="0" x2="0" y2="1"><stop offset="0" stop-color="#a4aab3"/><stop offset="1" stop-color="#8f959e"/></linearGradient><linearGradient id="gwall" x1="0.1" y1="0" x2="0" y2="1"><stop offset="0" stop-color="#b9bec5"/><stop offset="0.14" stop-color="#f6f7f9"/><stop offset="0.28" stop-color="#dfe2e6"/><stop offset="0.5" stop-color="#a4aab2"/><stop offset="1" stop-color="#777d85"/></linearGradient><linearGradient id="gfront" x1="0" y1="0" x2="1" y2="1"><stop offset="0" stop-color="#5f646b"/><stop offset="1" stop-color="#666b72"/></linearGradient></defs>
<polygon points="818.40,134.52 830.77,127.38 966.90,205.95 954.52,213.09" fill="url(#gtop)" stroke="#15171a" stroke-width="1.0" stroke-linejoin="round" />
<polygon points="954.52,213.09 966.90,205.95 966.90,363.13 954.52,370.27" fill="url(#gside)" stroke="#15171a" stroke-width="1.0" stroke-linejoin="round" />
<polygon points="818.40,291.70 818.40,134.52 954.52,213.09 954.52,370.27" fill="url(#gfront)" stroke="#15171a" stroke-width="1.0" stroke-linejoin="round" />
<path d="M26.448 23.210A12.0 12.0 0 1 1 26.448 9.790C26.980 10.577 27.250 11.530 28.100 11.530H33V21.470H28.100C27.250 21.470 26.980 22.423 26.448 23.210Z" transform="matrix(4.125 2.381 0 -4.763 818.40 291.70)" fill="#d4d9e0" stroke="#15171a" stroke-width="0.9" vector-effect="non-scaling-stroke"/>
<path d="M26.448 23.210A12.0 12.0 0 1 1 26.448 9.790C26.980 10.577 27.250 11.530 28.100 11.530H33V21.470H28.100C27.250 21.470 26.980 22.423 26.448 23.210Z" transform="matrix(4.125 2.381 0 -4.763 815.31 293.49)" fill="url(#gfront)" stroke="#15171a" stroke-width="0.9" vector-effect="non-scaling-stroke"/>
<polygon points="951.43,317.14 951.43,269.80 954.52,268.01 954.52,315.36" fill="#9aa0a9" stroke="none" stroke-width="0" stroke-linejoin="round" />
<path d="M954.52 316.16L954.52 267.21" fill="none" stroke="#9aa0a9" stroke-width="1.6"/>
<path d="M954.52 315.36L951.43 317.14L951.43 269.80L954.52 268.01" fill="none" stroke="#15171a" stroke-width="0.9" stroke-linejoin="round"/>
<circle cx="16.5" cy="16.5" r="9.4" transform="matrix(4.125 2.381 0 -4.763 815.31 293.49)" fill="#5a5f66" stroke="#15171a" stroke-width="0.9" vector-effect="non-scaling-stroke"/>
<clipPath id="cbore"><circle cx="16.5" cy="16.5" r="8.5" transform="matrix(4.125 2.381 0 -4.763 819.02 291.34)"/></clipPath>
<circle cx="16.5" cy="16.5" r="8.5" transform="matrix(4.125 2.381 0 -4.763 819.02 291.34)" fill="url(#gwall)" stroke="#15171a" stroke-width="0.9" vector-effect="non-scaling-stroke"/>
<g clip-path="url(#cbore)"><circle cx="16.5" cy="16.5" r="8.5" transform="matrix(4.125 2.381 0 -4.763 827.48 286.46)" fill="#fefefe" stroke="#15171a" stroke-width="0.9" vector-effect="non-scaling-stroke"/></g>
<circle cx="1.5" cy="6.383" r="0.62" transform="matrix(4.125 2.381 0 -4.763 818.40 291.70)" fill="#f2f3f5" stroke="#15171a" stroke-width="0.9" vector-effect="non-scaling-stroke"/>
<circle cx="6.383" cy="1.5" r="0.62" transform="matrix(4.125 2.381 0 -4.763 818.40 291.70)" fill="#f2f3f5" stroke="#15171a" stroke-width="0.9" vector-effect="non-scaling-stroke"/>
<circle cx="26.617" cy="1.5" r="0.62" transform="matrix(4.125 2.381 0 -4.763 818.40 291.70)" fill="#f2f3f5" stroke="#15171a" stroke-width="0.9" vector-effect="non-scaling-stroke"/>
<circle cx="31.5" cy="6.383" r="0.62" transform="matrix(4.125 2.381 0 -4.763 818.40 291.70)" fill="#f2f3f5" stroke="#15171a" stroke-width="0.9" vector-effect="non-scaling-stroke"/>
<circle cx="31.5" cy="26.617" r="0.62" transform="matrix(4.125 2.381 0 -4.763 818.40 291.70)" fill="#f2f3f5" stroke="#15171a" stroke-width="0.9" vector-effect="non-scaling-stroke"/>
<circle cx="26.617" cy="31.5" r="0.62" transform="matrix(4.125 2.381 0 -4.763 818.40 291.70)" fill="#f2f3f5" stroke="#15171a" stroke-width="0.9" vector-effect="non-scaling-stroke"/>
<circle cx="6.383" cy="31.5" r="0.62" transform="matrix(4.125 2.381 0 -4.763 818.40 291.70)" fill="#f2f3f5" stroke="#15171a" stroke-width="0.9" vector-effect="non-scaling-stroke"/>
<circle cx="1.5" cy="26.617" r="0.62" transform="matrix(4.125 2.381 0 -4.763 818.40 291.70)" fill="#f2f3f5" stroke="#15171a" stroke-width="0.9" vector-effect="non-scaling-stroke"/>
<circle cx="16.5" cy="1.5" r="0.42" transform="matrix(4.125 2.381 0 -4.763 818.40 291.70)" fill="#f2f3f5" stroke="#15171a" stroke-width="0.9" vector-effect="non-scaling-stroke"/>
<circle cx="16.5" cy="31.5" r="0.42" transform="matrix(4.125 2.381 0 -4.763 818.40 291.70)" fill="#f2f3f5" stroke="#15171a" stroke-width="0.9" vector-effect="non-scaling-stroke"/>
<circle cx="1.5" cy="16.5" r="0.42" transform="matrix(4.125 2.381 0 -4.763 818.40 291.70)" fill="#f2f3f5" stroke="#15171a" stroke-width="0.9" vector-effect="non-scaling-stroke"/>
<circle cx="24.27817459305202" cy="24.27817459305202" r="0.5" transform="matrix(4.125 2.381 0 -4.763 815.31 293.49)" fill="#f2f3f5" stroke="#15171a" stroke-width="0.9" vector-effect="non-scaling-stroke"/>
<circle cx="8.721825406947978" cy="24.27817459305202" r="0.5" transform="matrix(4.125 2.381 0 -4.763 815.31 293.49)" fill="#f2f3f5" stroke="#15171a" stroke-width="0.9" vector-effect="non-scaling-stroke"/>
<circle cx="8.721825406947975" cy="8.721825406947978" r="0.5" transform="matrix(4.125 2.381 0 -4.763 815.31 293.49)" fill="#f2f3f5" stroke="#15171a" stroke-width="0.9" vector-effect="non-scaling-stroke"/>
<circle cx="24.27817459305202" cy="8.721825406947975" r="0.5" transform="matrix(4.125 2.381 0 -4.763 815.31 293.49)" fill="#f2f3f5" stroke="#15171a" stroke-width="0.9" vector-effect="non-scaling-stroke"/>
<circle cx="6.383" cy="1.5" r="0.48" transform="matrix(4.125 2.381 4.125 -2.381 818.40 134.52)" fill="#3c4046" stroke="#15171a" stroke-width="0.7" vector-effect="non-scaling-stroke"/>
<circle cx="26.617" cy="1.5" r="0.48" transform="matrix(4.125 2.381 4.125 -2.381 818.40 134.52)" fill="#3c4046" stroke="#15171a" stroke-width="0.7" vector-effect="non-scaling-stroke"/>
<circle cx="1.5" cy="6.383" r="0.48" transform="matrix(4.125 -2.381 0 -4.763 954.52 370.27)" fill="#6a6f76" stroke="#15171a" stroke-width="0.8" vector-effect="non-scaling-stroke"/>
<circle cx="1.5" cy="26.617" r="0.48" transform="matrix(4.125 -2.381 0 -4.763 954.52 370.27)" fill="#6a6f76" stroke="#15171a" stroke-width="0.8" vector-effect="non-scaling-stroke"/>
<path d="M718.3 661.5V591.3H1001" stroke="#1c1c1c" stroke-width="1.1" fill="none"/>
<path d="M774.3 591.3V661.5M857.7 591.3V661.5" stroke="#1c1c1c" stroke-width="1.1" fill="none"/>
<path d="M718.3 624.3H774.3M718.3 632H774.3M718.3 641.3H774.3M718.3 647H774.3" stroke="#1c1c1c" stroke-width="0.9" fill="none"/>
<path d="M802.1 591.3V641.3M837.2 591.3V641.3M815.7 641.3V661.5" stroke="#1c1c1c" stroke-width="0.9" fill="none"/>
<path d="M774.3 600H857.7" stroke="#1c1c1c" stroke-width="0.9"/>
<path d="M774.3 608.3H857.7" stroke="#1c1c1c" stroke-width="0.9"/>
<path d="M774.3 616.3H857.7" stroke="#1c1c1c" stroke-width="0.9"/>
<path d="M774.3 625H857.7" stroke="#1c1c1c" stroke-width="0.9"/>
<path d="M774.3 633H857.7" stroke="#1c1c1c" stroke-width="0.9"/>
<path d="M774.3 641.3H857.7" stroke="#1c1c1c" stroke-width="0.9"/>
<path d="M857.7 608.8H1001M857.7 638.3H1001M857.7 652.6H1001M875.2 638.3V652.6M986.7 638.3V652.6M888.5 652.6V661.5M952 652.6V661.5" stroke="#1c1c1c" stroke-width="0.9" fill="none"/>
<rect x="925.3" y="610" width="11.3" height="41.4" fill="#dcdcdc"/>
<rect x="992.6" y="640" width="3.4" height="11" fill="#dcdcdc"/>
<path d="M926.3 615H935.6" stroke="#555" stroke-width="0.9" stroke-dasharray="1.3 0.6"/>
<path d="M926.3 624H935.6" stroke="#555" stroke-width="0.9" stroke-dasharray="1.3 0.6"/>
<path d="M926.3 632.5H935.6" stroke="#555" stroke-width="0.9" stroke-dasharray="1.3 0.6"/>
<path d="M926.3 646H935.6" stroke="#555" stroke-width="0.9" stroke-dasharray="1.3 0.6"/>
<path d="M994.3 645V648.5" stroke="#444" stroke-width="0.8"/>
<text x="719.3" y="595.2" font-family="Liberation Sans, sans-serif" font-size="3.0240000000000005" text-anchor="start" fill="#333" font-weight="normal">UNLESS OTHERWISE SPECIFIED,</text>
<text x="719.3" y="598.8" font-family="Liberation Sans, sans-serif" font-size="3.0240000000000005" text-anchor="start" fill="#333" font-weight="normal">DIMENSIONS ARE IN INCHES</text>
<text x="722" y="604.5" font-family="Liberation Sans, sans-serif" font-size="2.8000000000000003" text-anchor="start" fill="#333" font-weight="normal">.XX= ±.01</text>
<text x="721" y="607.3" font-family="Liberation Sans, sans-serif" font-size="2.8000000000000003" text-anchor="start" fill="#333" font-weight="normal">.XXX= ±.005</text>
<text x="719.3" y="610.1" font-family="Liberation Sans, sans-serif" font-size="2.8000000000000003" text-anchor="start" fill="#333" font-weight="normal">.XXXX= ±.0005</text>
<text x="748" y="606.3" font-family="Liberation Sans, sans-serif" font-size="2.8000000000000003" text-anchor="start" fill="#333" font-weight="normal">ANGULAR= ±1°</text>
<text x="747" y="609.3" font-family="Liberation Sans, sans-serif" font-size="2.8000000000000003" text-anchor="start" fill="#333" font-weight="normal">FRACTIONAL= ±⅛</text>
<text x="719.3" y="618.2" font-family="Liberation Sans, sans-serif" font-size="2.8000000000000003" text-anchor="start" fill="#333" font-weight="normal">SURFACE FINISH</text>
<path d="M743.5 617.5L745.6 620.3L748.2 614.7H751" stroke="#111" stroke-width="0.9" fill="none"/>
<text x="746.3" y="629.7" font-family="Liberation Sans, sans-serif" font-size="3.4" text-anchor="middle" fill="#444" font-weight="normal">DO NOT SCALE DRAWING</text>
<text x="746.3" y="635.7" font-family="Liberation Sans, sans-serif" font-size="3.0240000000000005" text-anchor="middle" fill="#333" font-weight="normal">BREAK ALL SHARP EDGES AND</text>
<text x="746.3" y="639.6" font-family="Liberation Sans, sans-serif" font-size="3.0240000000000005" text-anchor="middle" fill="#333" font-weight="normal">REMOVE BURRS</text>
<text x="746.3" y="645.5" font-family="Liberation Sans, sans-serif" font-size="3.0240000000000005" text-anchor="middle" fill="#333" font-weight="normal">THIRD ANGLE PROJECTION</text>
<circle cx="739.5" cy="654.3" r="4.4" fill="none" stroke="#111" stroke-width="0.9"/>
<circle cx="739.5" cy="654.3" r="2.2" fill="none" stroke="#111" stroke-width="0.9"/>
<path d="M733.5 654.3H745.5M739.5 648.3V660.3" stroke="#111" stroke-width="0.6"/>
<path d="M747.5 652.2L757.8 650V658.6L747.5 656.4Z" fill="none" stroke="#111" stroke-width="0.9"/>
<path d="M746 654.3H759.5" stroke="#111" stroke-width="0.5"/>
<text x="806" y="596.7" font-family="Liberation Sans, sans-serif" font-size="2.8000000000000003" text-anchor="start" fill="#333" font-weight="normal">NAME</text>
<text x="847.3" y="596.7" font-family="Liberation Sans, sans-serif" font-size="2.8000000000000003" text-anchor="middle" fill="#333" font-weight="normal">DATE</text>
<text x="775.3" y="603.2" font-family="Liberation Sans, sans-serif" font-size="2.8000000000000003" text-anchor="start" fill="#333" font-weight="normal">DRAWN</text>
<text x="819.5" y="605.3" font-family="Liberation Sans, sans-serif" font-size="3.0240000000000005" text-anchor="middle" fill="#333" font-weight="normal">Cody</text>
<text x="847.3" y="605.3" font-family="Liberation Sans, sans-serif" font-size="2.8000000000000003" text-anchor="middle" fill="#333" font-weight="normal">06/23/2018</text>
<text x="775.3" y="611.6" font-family="Liberation Sans, sans-serif" font-size="2.8000000000000003" text-anchor="start" fill="#333" font-weight="normal">CHECKED</text>
<text x="775.3" y="619.6" font-family="Liberation Sans, sans-serif" font-size="2.8000000000000003" text-anchor="start" fill="#333" font-weight="normal">APPROVED</text>
<text x="819.5" y="622.5" font-family="Liberation Sans, sans-serif" font-size="3.0240000000000005" text-anchor="middle" fill="#333" font-weight="normal">---</text>
<text x="847.3" y="622.5" font-family="Liberation Sans, sans-serif" font-size="3.0240000000000005" text-anchor="middle" fill="#333" font-weight="normal">---</text>
<text x="775.3" y="645" font-family="Liberation Sans, sans-serif" font-size="2.8000000000000003" text-anchor="start" fill="#333" font-weight="normal">MATERIAL</text>
<text x="816.7" y="645" font-family="Liberation Sans, sans-serif" font-size="2.8000000000000003" text-anchor="start" fill="#333" font-weight="normal">FINISH</text>
<text x="859" y="612.6" font-family="Liberation Sans, sans-serif" font-size="2.576" text-anchor="start" fill="#333" font-weight="normal">TITLE</text>
<text x="859" y="641.6" font-family="Liberation Sans, sans-serif" font-size="2.3520000000000003" text-anchor="start" fill="#333" font-weight="normal">SIZE</text>
<text x="876.5" y="641.6" font-family="Liberation Sans, sans-serif" font-size="2.3520000000000003" text-anchor="start" fill="#333" font-weight="normal">DWG NO.</text>
<text x="987.5" y="641.6" font-family="Liberation Sans, sans-serif" font-size="2.3520000000000003" text-anchor="start" fill="#333" font-weight="normal">REV</text>
<text x="866.2" y="649.2" font-family="Liberation Sans, sans-serif" font-size="10.2" text-anchor="middle" fill="#222" font-weight="normal">C</text>
<text x="859" y="655.6" font-family="Liberation Sans, sans-serif" font-size="2.3520000000000003" text-anchor="start" fill="#333" font-weight="normal">SCALE</text>
<text x="874.3" y="659.1" font-family="Liberation Sans, sans-serif" font-size="6.0" text-anchor="middle" fill="#333" font-weight="normal">1:6</text>
<text x="889.7" y="655.6" font-family="Liberation Sans, sans-serif" font-size="2.3520000000000003" text-anchor="start" fill="#333" font-weight="normal">WEIGHT</text>
<text x="953.2" y="655.6" font-family="Liberation Sans, sans-serif" font-size="2.3520000000000003" text-anchor="start" fill="#333" font-weight="normal">SHEET</text>
<text x="978" y="659.1" font-family="Liberation Sans, sans-serif" font-size="6.0" text-anchor="middle" fill="#333" font-weight="normal">1 of 1</text></svg>
</div>
<div id="tabbar">
<svg class="abs" style="left:0;top:0" width="76" height="28" viewBox="0 0 76 28"><path d="M8 6.6H24.4M19.6 11.6H24.4M19.6 15.8H24.4" stroke="#6a6a6a" stroke-width="1.6" fill="none"/><circle cx="13" cy="13.6" r="3.9" fill="none" stroke="#6a6a6a" stroke-width="1.6"/><path d="M15.8 16.6L19.2 20.2" stroke="#6a6a6a" stroke-width="1.8"/><path d="M44.8 13.6H59.8M52.3 6.2V21" stroke="#555" stroke-width="2.2" fill="none"/></svg>
<div class="tab" style="left:75.5px;width:145.5px"></div>
<svg class="abs" style="left:85px;top:4px" width="20" height="20" viewBox="0 0 20 20"><path d="M1.2 0.7H15.2L18.7 4.4V17.6H4.9L1.2 14.6Z" fill="#fbfbfb" stroke="#222" stroke-width="1.3" stroke-linejoin="round"/><path d="M1.7 1.2H10.9L13.5 4.6V12.8H5.6L1.7 11.7Z" fill="#8e8e8e"/><rect x="5.6" y="4.6" width="7.9" height="8.2" fill="#a2a2a2"/></svg>
<div class="tab" style="left:223.8px;width:138.5px"></div>
<svg class="abs" style="left:233px;top:4px" width="20" height="20" viewBox="0 0 20 20"><path d="M1 4.9H7L9.4 7.2V18H3.5L1 15.6Z" fill="#fcfcfc" stroke="#222" stroke-width="1.5" stroke-linejoin="round"/><path d="M1 4.9L3.6 7.4H9.4M3.6 7.4V18" fill="none" stroke="#333" stroke-width="0.8"/><path d="M10.4 0.7H16.5L18.8 3.1V18H13L10.4 15.5Z" fill="#fcfcfc" stroke="#222" stroke-width="1.5" stroke-linejoin="round"/><path d="M10.4 0.7L13 3.2H18.8M13 3.2V18" fill="none" stroke="#333" stroke-width="0.8"/></svg>
<div class="tab act" style="left:364.5px;width:99.5px"></div>
<svg class="abs" style="left:374.4px;top:4px" width="20" height="20" viewBox="0 0 20 20"><rect x="1.2" y="2.6" width="17" height="14.6" fill="#fff" stroke="#333" stroke-width="1.2"/><path d="M11.2 17.2V12.4H18.2" fill="none" stroke="#333" stroke-width="1.1"/></svg>
<div class="tab" style="left:466.2px;width:165.5px"></div>
<svg class="abs" style="left:476.4px;top:4px" width="20" height="20" viewBox="0 0 20 20"><path d="M1.2 0.7H15.2L18.7 4.4V17.6H4.9L1.2 14.6Z" fill="#fbfbfb" stroke="#222" stroke-width="1.3" stroke-linejoin="round"/><path d="M1.7 1.2H10.9L13.5 4.6V12.8H5.6L1.7 11.7Z" fill="#8e8e8e"/><rect x="5.6" y="4.6" width="7.9" height="8.2" fill="#a2a2a2"/></svg>
<div class="tab" style="left:634px;width:181.3px"></div>
<svg class="abs" style="left:643.4px;top:4px" width="20" height="20" viewBox="0 0 20 20"><path d="M1 4.9H7L9.4 7.2V18H3.5L1 15.6Z" fill="#fcfcfc" stroke="#222" stroke-width="1.5" stroke-linejoin="round"/><path d="M1 4.9L3.6 7.4H9.4M3.6 7.4V18" fill="none" stroke="#333" stroke-width="0.8"/><path d="M10.4 0.7H16.5L18.8 3.1V18H13L10.4 15.5Z" fill="#fcfcfc" stroke="#222" stroke-width="1.5" stroke-linejoin="round"/><path d="M10.4 0.7L13 3.2H18.8M13 3.2V18" fill="none" stroke="#333" stroke-width="0.8"/></svg>
<div class="tab" style="left:817.5px;width:179.5px"></div>
<svg class="abs" style="left:827.4px;top:4px" width="20" height="20" viewBox="0 0 20 20"><path d="M1 4.9H7L9.4 7.2V18H3.5L1 15.6Z" fill="#fcfcfc" stroke="#222" stroke-width="1.5" stroke-linejoin="round"/><path d="M1 4.9L3.6 7.4H9.4M3.6 7.4V18" fill="none" stroke="#333" stroke-width="0.8"/><path d="M10.4 0.7H16.5L18.8 3.1V18H13L10.4 15.5Z" fill="#fcfcfc" stroke="#222" stroke-width="1.5" stroke-linejoin="round"/><path d="M10.4 0.7L13 3.2H18.8M13 3.2V18" fill="none" stroke="#333" stroke-width="0.8"/></svg>
<div class="tab" style="left:999.3px;width:108.7px"></div>
<svg class="abs" style="left:1008.2px;top:4px" width="20" height="20" viewBox="0 0 20 20"><path d="M1.2 0.7H15.2L18.7 4.4V17.6H4.9L1.2 14.6Z" fill="#fbfbfb" stroke="#222" stroke-width="1.3" stroke-linejoin="round"/><path d="M1.7 1.2H10.9L13.5 4.6V12.8H5.6L1.7 11.7Z" fill="#8e8e8e"/><rect x="5.6" y="4.6" width="7.9" height="8.2" fill="#a2a2a2"/></svg>
<div class="tab" style="left:1110.2px;width:170px"></div>
<svg class="abs" style="left:1119.6px;top:4px" width="20" height="20" viewBox="0 0 20 20"><path d="M1.2 0.7H15.2L18.7 4.4V17.6H4.9L1.2 14.6Z" fill="#fbfbfb" stroke="#222" stroke-width="1.3" stroke-linejoin="round"/><path d="M1.7 1.2H10.9L13.5 4.6V12.8H5.6L1.7 11.7Z" fill="#8e8e8e"/><rect x="5.6" y="4.6" width="7.9" height="8.2" fill="#a2a2a2"/></svg>
<span class="tx" style="left:108.1px;top:6.28px;font-size:14.5px;font-weight:normal;color:#6a6a6a;transform:scaleX(0.9664)">Master Assembly</span>
<span class="tx" style="left:255.8px;top:6.28px;font-size:14.5px;font-weight:normal;color:#6a6a6a;transform:scaleX(0.9421)">Main Part Studio</span>
<span class="tx" style="left:397.3px;top:6.28px;font-size:14.5px;font-weight:normal;color:#333;transform:scaleX(0.9329)">Drawing 1</span>
<span class="tx" style="left:499.0px;top:6.28px;font-size:14.5px;font-weight:normal;color:#6a6a6a;transform:scaleX(0.9551)">Hoist Ring Assembly</span>
<span class="tx" style="left:666.2px;top:6.28px;font-size:14.5px;font-weight:normal;color:#6a6a6a;transform:scaleX(0.9357)">Hoist Ring Components</span>
<span class="tx" style="left:850.2px;top:6.28px;font-size:14.5px;font-weight:normal;color:#6a6a6a;transform:scaleX(0.9517)">Hydraulic Components</span>
<span class="tx" style="left:1030.6px;top:6.28px;font-size:14.5px;font-weight:normal;color:#6a6a6a;transform:scaleX(0.9459)">Assembly 1</span>
<span class="tx" style="left:1142.0px;top:6.28px;font-size:14.5px;font-weight:normal;color:#6a6a6a;transform:scaleX(0.9350)">Workholding Components</span>
<div class="abs" style="left:1222px;top:0;width:56px;height:28px;background:linear-gradient(90deg,rgba(216,216,216,0) 0,#d8d8d8 9px)"></div>
<svg class="abs" style="left:1228px;top:0" width="50" height="28" viewBox="1228 0 50 28"><path d="M1245.4 8L1239.2 14L1245.4 20" fill="none" stroke="#9a9a9a" stroke-width="2"/><path d="M1263.6 8L1269.8 14L1263.6 20" fill="none" stroke="#555" stroke-width="2"/></svg>
</div>
</body>
</html>
